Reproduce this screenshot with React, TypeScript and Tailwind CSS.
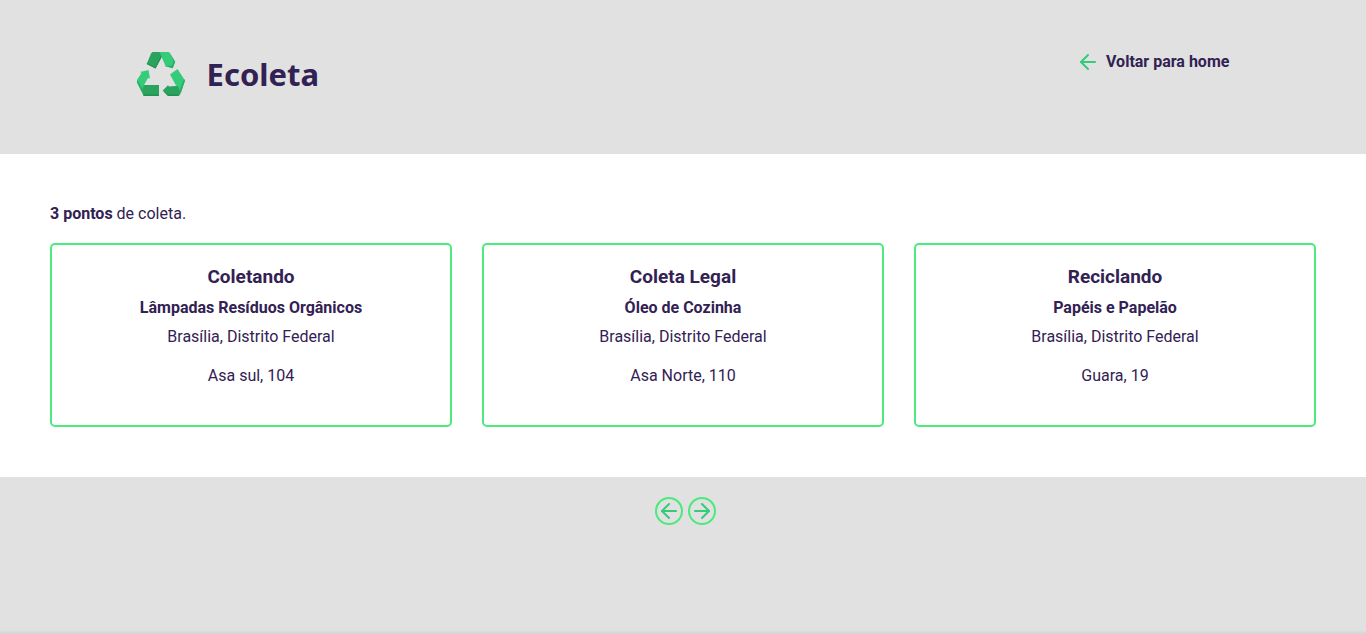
import React from "react";
import { FiArrowLeft, FiArrowRight } from "react-icons/fi";

interface CollectPoint {
  name: string;
  items: string;
  region: string;
  address: string;
}

const points: CollectPoint[] = [
  {
    name: "Coletando",
    items: "Lâmpadas Resíduos Orgânicos",
    region: "Brasília, Distrito Federal",
    address: "Asa sul, 104",
  },
  {
    name: "Coleta Legal",
    items: "Óleo de Cozinha",
    region: "Brasília, Distrito Federal",
    address: "Asa Norte, 110",
  },
  {
    name: "Reciclando",
    items: "Papéis e Papelão",
    region: "Brasília, Distrito Federal",
    address: "Guara, 19",
  },
];

function Logo() {
  return (
    <a href="#" className="flex items-center gap-[22px]">
      <svg width="48" height="44" viewBox="0 0 48 44" aria-hidden="true">
        <path d="M15.5 0H24L25.5 3.5L18.5 16.5L9.7 12L14 1.5Z" fill="#2aa35f" />
        <path d="M18.5 16.5L9.7 12L10.2 11L18 15L24.5 2.5L25.5 3.5Z" fill="#268f54" />
        <path d="M22.5 0H31Q32.3 0 33 1.2L38 10.5L35.7 16.2L28.5 14Z" fill="#34cb79" />
        <path d="M33 1.2L38.2 9.5L35.7 16.2L27.5 14L35 13.8L36.5 9Z" fill="#2aae66" />
        <path d="M3 20L11.5 18L13 26.5L11 26L7 33L6.5 43L0 30V28L4.5 21Z" fill="#34cb79" />
        <path d="M0 28L7 39L8 44H6.8L0 30.5Z" fill="#2aae66" />
        <path d="M7 33H22V44H8Q6.5 44 6 42.5L5.8 36Z" fill="#2aa35f" />
        <path d="M6.2 42.5H22V44H8Q6.8 44 6.2 42.5Z" fill="#268f54" />
        <path d="M33 22.5L40.5 17L48 28.5L43.8 41L40.5 34L39 33.5Z" fill="#34cb79" />
        <path d="M47 27L48 28.5L43.8 41L42.5 38.3Z" fill="#2aae66" />
        <path d="M25.7 38.5L31 33.2L32 34.5L40.8 33.8L43.8 41Q42.5 44 40 44H31Z" fill="#2aa35f" />
        <path d="M25.7 38.5L31.2 42.5H43.2Q42.2 44 40 44H31Z" fill="#268f54" />
      </svg>
      <span className="font-['Noto_Sans',sans-serif] text-[31px] leading-[44px] font-bold">
        Ecoleta
      </span>
    </a>
  );
}

function PointCard({ point }: { point: CollectPoint }) {
  return (
    <article className="flex flex-col items-center rounded-[5px] border-2 border-[#4aea7c] px-5 pt-5 pb-10 text-center">
      <h2 className="text-[19px] leading-[23px] font-bold">{point.name}</h2>
      <h3 className="mt-[10px] font-bold">{point.items}</h3>
      <p className="mt-[10px]">{point.region}</p>
      <p className="mt-5">{point.address}</p>
    </article>
  );
}

export default function App() {
  return (
    <div className="flex min-h-screen flex-col bg-[#e1e1e1] font-[Roboto,sans-serif] text-base leading-[19px] text-[#322153]">
      <header className="mx-auto flex w-4/5 items-start justify-between pt-[50px] pb-[56px]">
        <div className="py-[2px]">
          <Logo />
        </div>
        <a href="#" className="flex items-center gap-[6px] leading-[22px] font-bold">
          <FiArrowLeft size={24} className="text-[#34cb79]" aria-hidden="true" />
          Voltar para home
        </a>
      </header>

      <main className="bg-white p-[50px]">
        <p>
          <strong className="font-bold">3 pontos</strong> de coleta.
        </p>
        <section className="mt-5 grid grid-cols-3 gap-[30px]">
          {points.map((point) => (
            <PointCard key={point.name} point={point} />
          ))}
        </section>
      </main>

      <nav className="flex justify-center gap-[5px] pt-5 pl-[5px]" aria-label="Paginação">
        <button
          type="button"
          aria-label="Página anterior"
          className="flex size-7 items-center justify-center rounded-full border-2 border-[#4aea7c] text-[#34cb79]"
        >
          <FiArrowLeft size={24} className="shrink-0" />
        </button>
        <button
          type="button"
          aria-label="Próxima página"
          className="flex size-7 items-center justify-center rounded-full border-2 border-[#4aea7c] text-[#34cb79]"
        >
          <FiArrowRight size={24} className="shrink-0" />
        </button>
      </nav>

      <div className="mt-auto h-1 bg-linear-to-b from-[#e1e1e1] to-[#d5d4d4]" />
    </div>
  );
}
